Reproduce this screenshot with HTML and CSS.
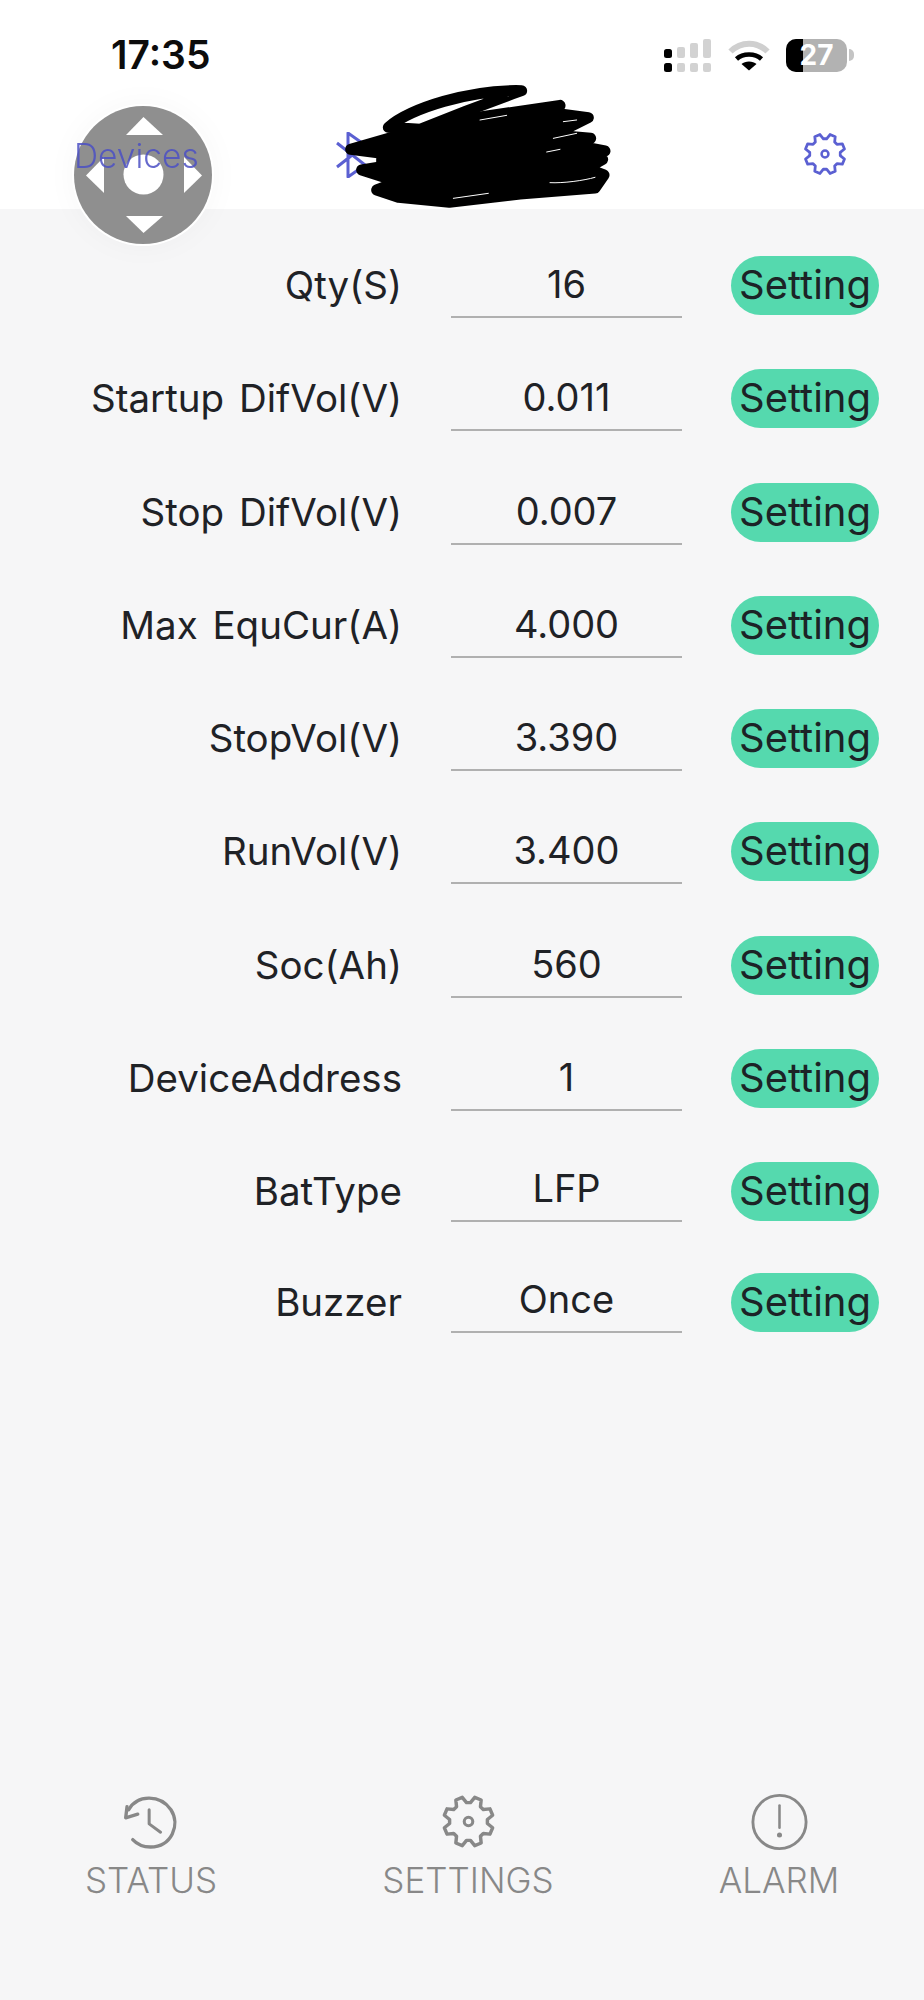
FILE: index.html
```html
<!DOCTYPE html>
<html lang="en">
<head>
<meta charset="utf-8">
<title>Settings</title>
<link rel="stylesheet" href="styles.css">
</head>
<body>
<svg class="defs" width="0" height="0" aria-hidden="true">
  <symbol id="gear" viewBox="-24 -24 48 48">
    <path d="M1.67-15.91 5.26-20.33 10.66-18.09 10.07-12.43 12.43-10.07 18.09-10.66 20.33-5.26 15.91-1.67 15.91 1.67 20.33 5.26 18.09 10.66 12.43 10.07 10.07 12.43 10.66 18.09 5.26 20.33 1.67 15.91-1.67 15.91-5.26 20.33-10.66 18.09-10.07 12.43-12.43 10.07-18.09 10.66-20.33 5.26-15.91 1.67-15.91-1.67-20.33-5.26-18.09-10.66-12.43-10.07-10.07-12.43-10.66-18.09-5.26-20.33-1.67-15.91Z" fill="none" stroke="currentColor" stroke-width="2.9" stroke-linejoin="round"/>
    <circle r="3.6" fill="none" stroke="currentColor" stroke-width="2.6"/>
  </symbol>
</svg>
<div class="page">
  <header class="top">
    <div class="status">
      <span class="time">17:35</span>
      <div class="status-icons">
        <svg class="signal" width="47" height="33" viewBox="0 0 47 33">
          <g fill="#d2d2d2">
            <rect x="13" y="8" width="8" height="11" rx="2"/>
            <rect x="26" y="4" width="8" height="15" rx="2"/>
            <rect x="39" y="0" width="8" height="19" rx="2"/>
            <rect x="13" y="24" width="8" height="9" rx="2"/>
            <rect x="26" y="24" width="8" height="9" rx="2"/>
            <rect x="39" y="24" width="8" height="9" rx="2"/>
          </g>
          <rect x="0" y="10" width="8" height="9" rx="2.5"/>
          <rect x="0" y="24" width="8" height="9" rx="2.5"/>
        </svg>
        <svg class="wifi" width="42" height="31" viewBox="0 0 42 31">
          <path d="M2.5 11.5C13 1 29 1 39.5 11.5" fill="none" stroke="#cfcfcf" stroke-width="6"/>
          <path d="M8.5 19C15 13 27 13 33.5 19" fill="none" stroke="#000" stroke-width="4.6"/>
          <path d="M13.5 24C17 20.6 25 20.6 28.5 24L21 30.5Z"/>
        </svg>
        <div class="battery">
          <div class="battery-body"><span class="battery-fill"></span><span class="battery-num">27</span></div>
          <span class="battery-cap"></span>
        </div>
      </div>
    </div>
    <nav class="nav">
      <span class="devices">Devices</span>
      <svg class="bt" width="36" height="46" viewBox="0 0 36 46">
        <path d="M2 11 30 33 13 45V1L30 13 2 35" fill="none" stroke="currentColor" stroke-width="3" stroke-linejoin="round"/>
      </svg>
      <svg class="nav-gear" width="46" height="46"><use href="#gear"/></svg>
    </nav>
  </header>

  <main class="form">
    <div class="row"><span class="label">Qty(S)</span><span class="field">16</span><button class="btn">Setting</button></div>
    <div class="row"><span class="label">Startup DifVol(V)</span><span class="field">0.011</span><button class="btn">Setting</button></div>
    <div class="row"><span class="label">Stop DifVol(V)</span><span class="field">0.007</span><button class="btn">Setting</button></div>
    <div class="row"><span class="label">Max EquCur(A)</span><span class="field">4.000</span><button class="btn">Setting</button></div>
    <div class="row"><span class="label">StopVol(V)</span><span class="field">3.390</span><button class="btn">Setting</button></div>
    <div class="row"><span class="label">RunVol(V)</span><span class="field">3.400</span><button class="btn">Setting</button></div>
    <div class="row"><span class="label">Soc(Ah)</span><span class="field">560</span><button class="btn">Setting</button></div>
    <div class="row"><span class="label">DeviceAddress</span><span class="field">1</span><button class="btn">Setting</button></div>
    <div class="row row-short"><span class="label">BatType</span><span class="field">LFP</span><button class="btn">Setting</button></div>
    <div class="row row-short row-last"><span class="label">Buzzer</span><span class="field">Once</span><button class="btn">Setting</button></div>
  </main>

  <footer class="tabs">
    <div class="tab">
      <svg class="tab-icon" width="57" height="57" viewBox="190 65 170 170">
        <path d="M207 115C232 70 300 68 333 115C362 160 335 225 272 226C250 226 232 218 219 204" fill="none" stroke="currentColor" stroke-width="10" stroke-linecap="round"/>
        <path d="M202 106 198 139 234 128" fill="none" stroke="currentColor" stroke-width="10" stroke-linejoin="round" stroke-linecap="round"/>
        <path d="M268 115V157L302 182" fill="none" stroke="currentColor" stroke-width="9" stroke-linecap="round" stroke-linejoin="round"/>
      </svg>
      <span>STATUS</span>
    </div>
    <div class="tab">
      <svg class="tab-icon" width="57" height="57"><use href="#gear"/></svg>
      <span>SETTINGS</span>
    </div>
    <div class="tab">
      <svg class="tab-icon" width="57" height="57" viewBox="270 65 180 171">
        <circle cx="360" cy="152" r="84" fill="none" stroke="currentColor" stroke-width="9"/>
        <path d="M360 100V170" fill="none" stroke="currentColor" stroke-width="8" stroke-linecap="round"/>
        <circle cx="360" cy="193" r="8" fill="currentColor"/>
      </svg>
      <span>ALARM</span>
    </div>
  </footer>
</div>

<svg class="scribble" width="310" height="150" viewBox="0 0 930 450">
  <g fill="none" stroke="#000" stroke-width="33" stroke-linecap="round" stroke-linejoin="round">
    <path d="M205 172C270 115 450 58 605 62C540 85 430 125 300 178L205 172"/>
    <path d="M92 238 240 195 420 150 720 106 670 125 805 143 700 195 812 205 760 225 855 243 790 258 848 268 800 295 852 315 825 354 600 372 388 397 235 382 170 360 235 335 125 300 185 290 185 250Z" fill="#000"/>
  </g>
  <g fill="none" stroke="#fff" stroke-width="3" stroke-linecap="round">
    <path d="M690 338C730 340 790 332 825 322"/>
    <path d="M400 385 505 370"/>
    <path d="M480 150 560 136"/>
    <path d="M680 246 720 238"/>
    <path d="M730 155 770 150"/>
    <path d="M700 205 770 190"/>
  </g>
</svg>

<svg class="joystick" width="146" height="146" viewBox="70 102 146 146">
  <circle cx="143" cy="175" r="71" fill="#fff"/>
  <circle cx="143" cy="175" r="69" fill="#8f8f8f"/>
  <g fill="#fff">
    <circle cx="143.500" cy="174.500" r="20"/>
    <path d="M143.500 117 163 135H126Z"/>
    <path d="M143.500 233 163 216H126Z"/>
    <path d="M86 175.500 104 157V193Z"/>
    <path d="M202 175.500 184 157V193Z"/>
  </g>
</svg>
</body>
</html>
```
FILE: styles.css
```css
* { box-sizing: border-box; }
html, body { margin: 0; padding: 0; }
body { background: #f6f6f7; font-family: Inter, "Liberation Sans", sans-serif; color: #1f2226; }
.defs { position: absolute; }
.page { min-height: 2000px; width: 924px; display: flex; flex-direction: column; }

.top { background: #fff; height: 209px; }
.status { height: 101px; padding: 38px 70px 29px 111px; display: flex; align-items: center; justify-content: space-between; }
.time { font-size: 39px; line-height: 34px; font-weight: 600; color: #0c0c0c; }
.status-icons { display: flex; align-items: center; }
.signal { display: block; margin-right: 17px; }
.wifi { display: block; margin-right: 16px; }
.battery { display: flex; align-items: center; gap: 2px; }
.battery-body { position: relative; width: 61px; height: 33px; border-radius: 10px; background: #b2b2b2; overflow: hidden; display: flex; align-items: center; justify-content: center; }
.battery-fill { position: absolute; left: 0; top: 0; bottom: 0; width: 17px; background: #000; }
.battery-num { position: relative; font-size: 28px; line-height: 1; font-weight: 700; color: #fff; }
.battery-cap { width: 5px; height: 12px; border-radius: 0 5px 5px 0; background: #c4c4c4; }

.nav { height: 108px; padding: 0 76px 0 74px; display: flex; align-items: center; color: #5b60d2; }
.devices { position: relative; z-index: 2; width: 261px; font-size: 33.500px; line-height: 40px; font-weight: 300; color: #4c50c4; opacity: .85; margin-top: 1px; }
.bt { display: block; }
.nav-gear { display: block; margin-left: auto; margin-top: -2px; }

.form { flex: 1; padding-top: 47px; display: flex; flex-direction: column; gap: 51.300px; }
.row { display: grid; grid-template-columns: 402px 231px 148px; column-gap: 49px; height: 62px; align-items: start; font-size: 38px; }
.label { font-size: 38.500px; text-align: right; line-height: 58px; white-space: nowrap; word-spacing: 4px; }
.field { height: 62px; border-bottom: 2px solid #b0b0b0; text-align: center; line-height: 57px; }
.btn { height: 59px; width: 148px; padding: 0 0 2px; border: 0; border-radius: 30px; background: #55d9ae; color: #1c2326; font: inherit; font-size: 40px; line-height: 55px; }
.row-short .field { height: 60px; line-height: 53px; }
.row-last { margin-top: -3px; }

.tabs { display: grid; grid-template-columns: 302px 332px 290px; height: 207px; color: #888; }
.tab { display: flex; flex-direction: column; align-items: center; font-size: 35px; font-weight: 300; line-height: 40px; }
.tab-icon { display: block; margin-bottom: 10px; }

.scribble { position: absolute; left: 320px; top: 70px; }
.joystick { position: absolute; z-index: 1; left: 70px; top: 102px; filter: drop-shadow(0 0 12px rgba(0,0,0,.03)); }
```
